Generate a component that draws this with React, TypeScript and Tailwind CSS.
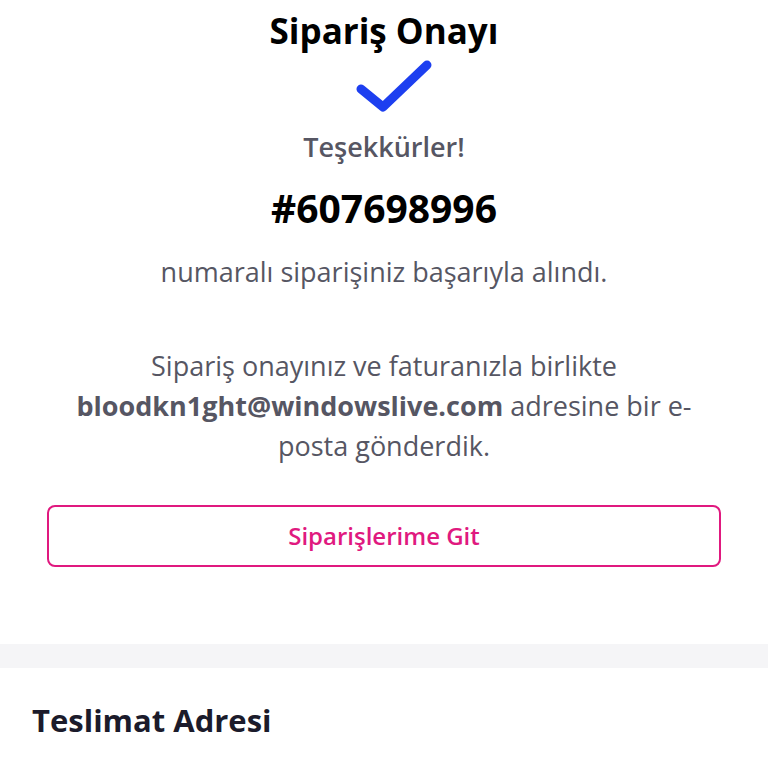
const App = () => {
  return (
    <div className="min-h-[768px] bg-white font-['Open_Sans',sans-serif]">
      <section className="flex flex-col items-center px-[47px] pt-[9px] pb-[77px] text-center">
        <h1 className="text-[35px] font-bold leading-[44px] text-black">Sipariş Onayı</h1>
        <svg viewBox="0 0 80 56" className="mt-[5px] ml-[16px] h-[56px] w-[80px]" fill="none">
          <path d="M9 31 L31 49 L75 7" stroke="#1d3ff0" strokeWidth="9" strokeLinecap="round" strokeLinejoin="round" />
        </svg>
        <p className="mt-[15px] text-[27px] font-semibold leading-[36px] text-[#565663]">Teşekkürler!</p>
        <p className="mt-[19px] text-[39px] font-bold leading-[48px] text-black">#607698996</p>
        <p className="mt-[22px] text-[27px] leading-[36px] text-[#565663]">
          numaralı siparişiniz başarıyla alındı.
        </p>
        <p className="mt-[56px] text-[27px] leading-[40px] text-[#565663]">
          Sipariş onayınız ve faturanızla birlikte
          <br />
          <span className="font-bold">bloodkn1ght@windowslive.com</span> adresine bir e-
          <br />
          posta gönderdik.
        </p>
        <button className="mt-[39px] flex h-[62px] w-full items-center justify-center rounded-[8px] border-2 border-[#e0197f] bg-white text-[24px] font-semibold text-[#e0197f]">
          Siparişlerime Git
        </button>
      </section>
      <div className="h-[24px] bg-[#f5f5f7]" />
      <section className="px-8 pt-[32px] pb-8">
        <h2 className="text-[31px] font-bold leading-[40px] text-[#1b1b2b]">Teslimat Adresi</h2>
      </section>
    </div>
  );
};

export default App;
